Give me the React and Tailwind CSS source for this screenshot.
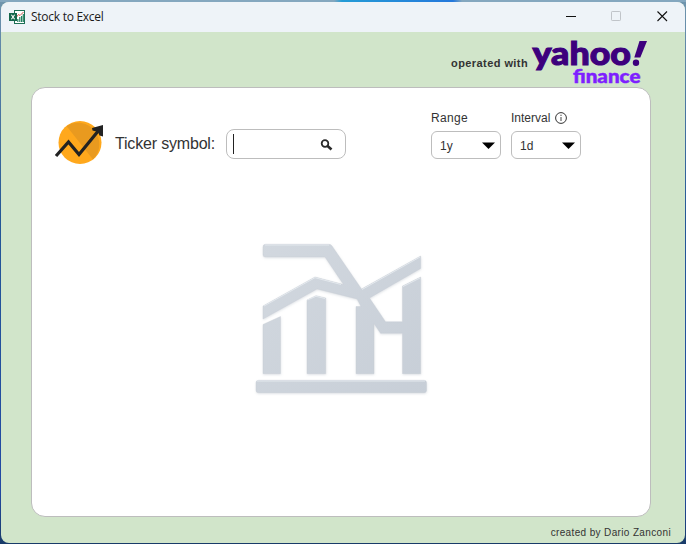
import React from "react";

function ExcelIcon() {
  return (
    <svg width="16" height="14" viewBox="0 0 16 14">
      <rect x="5.5" y="0.5" width="10" height="13" fill="#fff" stroke="#1d6f55" />
      <path d="M8.8 12V9M10.8 12V7M12.6 12V6M14.3 12V4" stroke="#23805f" strokeWidth="1.2" />
      <path d="M7.5 7L9.5 4.5L11 5.5L14.5 2" stroke="#d0534b" fill="none" />
      <rect x="0" y="3" width="8" height="8" fill="#14664b" />
      <path d="M2.4 4.8L5.6 9.2M5.6 4.8L2.4 9.2" stroke="#fff" strokeWidth="1.1" />
    </svg>
  );
}

function TitleBar() {
  return (
    <header className="flex h-[30px] shrink-0 items-center bg-[#eef3f8] pl-2">
      <ExcelIcon />
      <span className="ml-[6px] font-['Open_Sans','Noto_Sans',sans-serif] text-[12px] leading-none tracking-[-0.27px] text-[#1a1a1a]">
        Stock to Excel
      </span>
      <div className="-mr-px ml-auto flex items-center">
        <svg width="46" height="28" viewBox="0 0 46 28">
          <path d="M18 13.5H28" stroke="#111" />
        </svg>
        <svg width="46" height="28" viewBox="0 0 46 28">
          <rect x="17.5" y="8.5" width="9" height="9" rx="0.7" fill="none" stroke="#c0c4c9" />
        </svg>
        <svg width="46" height="28" viewBox="0 0 46 28">
          <path d="M17.5 8.5L27 18M27 8.5L17.5 18" stroke="#111" strokeWidth="1.1" />
        </svg>
      </div>
    </header>
  );
}

function YahooLogo() {
  return (
    <svg className="overflow-visible" width="118" height="48" viewBox="531 38 118 48">
      <g fontFamily="Lato, sans-serif" fontWeight="900">
        <text x="532.5" y="65.4" fontSize="33" textLength="98.5" lengthAdjust="spacingAndGlyphs" fill="#3d007d" stroke="#3d007d" strokeWidth="1.1">
          yahoo
        </text>
        <text x="573" y="82.5" fontSize="18.5" textLength="67.5" lengthAdjust="spacingAndGlyphs" fill="#7e1fff" stroke="#7e1fff" strokeWidth="0.5">
          finance
        </text>
      </g>
      <path d="M639.5 41H647L640.3 57.5H634.3Z" fill="#3d007d" />
      <circle cx="636" cy="62.8" r="3.2" fill="#3d007d" />
    </svg>
  );
}

function TickerIcon() {
  return (
    <svg width="50" height="46" viewBox="54 120 50 46">
      <circle cx="80" cy="142.5" r="21.5" fill="#ffa81c" />
      <path d="M66.5 126A21.5 21.5 0 0 1 93 159.5Z" fill="#e99a1f" />
      <path d="M56 156L68.5 142L79 154.5L99 130" fill="none" stroke="#222" strokeWidth="3.2" />
      <path d="M92 128L103 125V136.5L99.5 135.5L98 132L92.5 130.5Z" fill="#222" />
    </svg>
  );
}

function Select({ value }) {
  return (
    <button className="flex h-7 w-[70px] items-center justify-between rounded-[6px] border border-[#bdbdbd] bg-white pr-[5px] pl-2 text-[12px] text-[#333]">
      <span className="pt-px">{value}</span>
      <svg width="14" height="8" viewBox="0 0 14 8">
        <path d="M1 1.5H14L7.5 8Z" fill="#000" />
      </svg>
    </button>
  );
}

function Watermark() {
  return (
    <svg width="176" height="156" viewBox="254 241 176 156">
      <defs>
        <linearGradient id="metal" x1="254" y1="241" x2="430" y2="397" gradientUnits="userSpaceOnUse">
          <stop offset="0" stopColor="#d2d8df" />
          <stop offset="1" stopColor="#c7ced7" />
        </linearGradient>
        <filter id="soft" x="-10%" y="-10%" width="120%" height="120%">
          <feDropShadow dx="0.3" dy="1" stdDeviation="0.9" floodColor="#8d99a8" floodOpacity="0.28" />
        </filter>
      </defs>
      <g fill="url(#metal)" stroke="#c3cad2" strokeOpacity="0.6" strokeWidth="0.6" strokeLinejoin="round" filter="url(#soft)">
        <path d="M265.5 244.3H329Q331 244.3 332 246L361.5 289L420.7 256V268.5L369.5 298L385.5 321.7H402.5V286L420.7 277V373.7H402.5V333.3H380.5L374 323.5V373.7H356V306.5H361L357 299L317 289L263 319V306L315 277L343.5 284.5L325 257H265.5Q263 257 263 254.5V247Q263 244.3 265.5 244.3Z" />
        <path d="M263 324.5L280.5 316.5V373.7H263Z" />
        <path d="M307 300L316 295.7L325.7 298V373.7H307Z" />
        <rect x="256" y="380.3" width="170.5" height="12.4" rx="2.5" />
      </g>
      <path d="M265 245H329M264 306L315 277.7L341 284.5M362 289.5L420 257M257 381H425M403 286.5L420 278M307.5 300L316 296.3L325 298.5" fill="none" stroke="#e4e9ee" strokeWidth="1" />
    </svg>
  );
}

function Panel() {
  return (
    <main className="ml-[30px] h-[430px] w-[620px] shrink-0 rounded-[14px] border border-[#bdbdbd] bg-white">
      <div className="flex items-start pl-[22px]">
        <div className="mt-8"><TickerIcon /></div>
        <label className="mt-[44px] ml-[11px] w-[100px] text-[16px] leading-6 tracking-[-0.18px] whitespace-nowrap text-[#333]">
          Ticker symbol:
        </label>
        <div className="mt-[41px] ml-[11px] flex h-[30px] w-[120px] items-center justify-between rounded-[8px] border border-[#bdbdbd] pr-3 pl-[6px]">
          <span className="h-5 w-px bg-[#222]" />
          <svg className="mt-px" width="13" height="12" viewBox="0 0 13 12">
            <circle cx="5" cy="4.5" r="3.3" fill="none" stroke="#2b2b2b" strokeWidth="1.8" />
            <path d="M7.3 6.8L11.5 10.5" stroke="#2b2b2b" strokeWidth="2.7" />
          </svg>
        </div>
        <div className="mt-[22px] ml-[85px] flex gap-[10px] text-[12px] text-[#333]">
          <div>
            <div className="mb-[5px] h-4 leading-4 tracking-[0.3px]">Range</div>
            <Select value="1y" />
          </div>
          <div>
            <div className="mb-[5px] flex h-4 items-center gap-[5px] leading-4">
              Interval
              <svg width="12" height="12" viewBox="0 0 12 12">
                <circle cx="6" cy="6" r="5.4" fill="none" stroke="#333" />
                <path d="M6 5V9M6 2.7V4" stroke="#444" />
              </svg>
            </div>
            <Select value="1d" />
          </div>
        </div>
      </div>
      <div className="mt-[75px] pl-[222px]"><Watermark /></div>
    </main>
  );
}

export default function App() {
  return (
    <div className="h-[544px] w-[686px] overflow-hidden bg-[linear-gradient(#7095ad,#245797_40%,#2349a4_90%,#183b68)] font-['Liberation_Sans',Arial,sans-serif]">
      <div className="h-[2px] bg-[linear-gradient(90deg,#84a7bf_0px,#84a7bf_334px,#249bd6_342px,#2478dc_453px,#84a7bf_462px)]" />
      <div className="mx-px flex h-[541px] flex-col overflow-hidden rounded-[8px] bg-[#d1e5ca]">
        <TitleBar />
        <div className="flex h-[55px] shrink-0 items-start pt-[6px] pl-[450px]">
          <span className="mt-[17px] w-[80px] text-[11px] leading-4 font-bold tracking-[0.43px] whitespace-nowrap text-[#333]">
            operated with
          </span>
          <YahooLogo />
        </div>
        <Panel />
        <footer className="mt-2 mr-[14px] text-right text-[10px] leading-4 text-[#333]">
          <span className="tracking-[0.36px]">created by Dario Zanconi</span>
        </footer>
      </div>
    </div>
  );
}
